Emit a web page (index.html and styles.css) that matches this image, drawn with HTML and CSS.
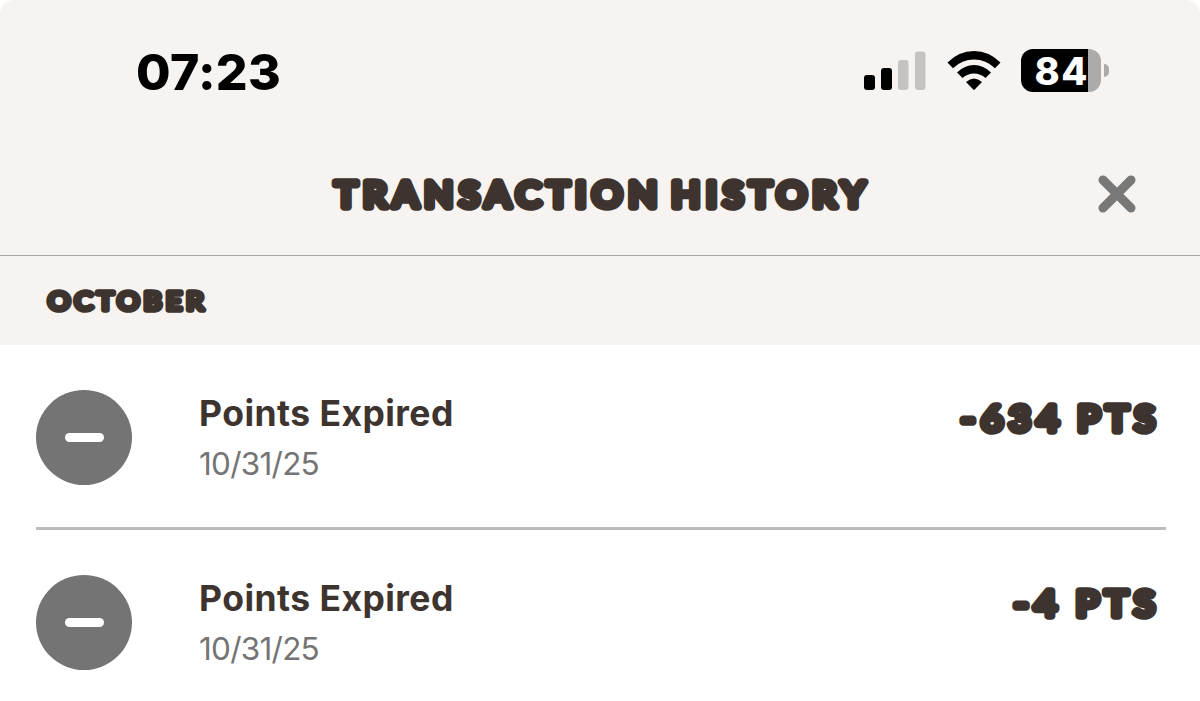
FILE: index.html
```
<!DOCTYPE html>
<html lang="en">
<head>
    <meta charset="UTF-8">
    <meta name="viewport" content="width=device-width, initial-scale=1.0">
    <title>Transaction History</title>

    <link rel="stylesheet" href="styles.css">
</head>
<body>

    <div class="screen">
        <div class="top">
            <div class="status-bar">
                <div class="time">07:23</div>
                <div class="status-icons">
                    <svg class="signal" width="62" height="40" viewBox="0 0 62 40">
                        <rect x="0" y="24" width="11" height="15" rx="3"/>
                        <rect x="17" y="17" width="11" height="22" rx="3"/>
                        <rect class="off" x="34" y="9" width="10.5" height="30" rx="3"/>
                        <rect class="off" x="51" y="0.5" width="10.5" height="38.5" rx="3"/>
                    </svg>
                    <svg class="wifi" width="54" height="40" viewBox="0 0 54 40">
                        <path d="M0.5 11.5 Q12 0 27 0 Q42 0 53.5 11.5 L48 17.2 Q39 8.5 27 8.5 Q15 8.5 6 17.2 Z"/>
                        <path d="M10 21.5 Q17.5 14 27 14 Q36.5 14 44 21.5 L38.5 27 Q33.5 22.5 27 22.5 Q20.5 22.5 15.5 27 Z"/>
                        <path d="M19 31 Q27 24 35 31 L27.7 38.5 Q27 39 26.3 38.5 Z"/>
                    </svg>
                    <div class="battery">
                        <div class="battery-body">84</div>
                        <div class="battery-tip"></div>
                    </div>
                </div>
            </div>

            <header>
                <svg class="rounded title" width="552" height="52">
                    <text x="7" y="32" textLength="536" lengthAdjust="spacingAndGlyphs">TRANSACTION HISTORY</text>
                </svg>
                <svg class="close" width="38" height="38" viewBox="0 0 38 38">
                    <path d="M5 5 L33 33 M33 5 L5 33"/>
                </svg>
            </header>
        </div>

        <div class="month">
            <svg class="rounded month-name" width="180" height="50">
                <text x="7" y="37" textLength="160" lengthAdjust="spacingAndGlyphs">OCTOBER</text>
            </svg>
        </div>

        <div class="list">
            <div class="item">
                <div class="minus"></div>
                <div class="info">
                    <h2>Points Expired</h2>
                    <p>10/31/25</p>
                </div>
                <svg class="rounded points" width="210" height="52">
                    <text x="5" y="32" textLength="200" lengthAdjust="spacingAndGlyphs">-634 PTS</text>
                </svg>
            </div>
            <div class="item">
                <div class="minus"></div>
                <div class="info">
                    <h2>Points Expired</h2>
                    <p>10/31/25</p>
                </div>
                <svg class="rounded points" width="210" height="52">
                    <text x="58" y="32" textLength="147" lengthAdjust="spacingAndGlyphs">-4 PTS</text>
                </svg>
            </div>
        </div>
    </div>

</body>
</html>
```
FILE: styles.css
```
*{
    margin: 0;
    padding: 0;
    box-sizing: border-box;
}

body{
    background-color: white;
    font-family: Inter, "Liberation Sans", sans-serif;
    color: #3e342f;
}

.screen{
    width: 1200px;
    height: 701px;
    overflow: hidden;
}

.top{
    height: 256px;
    background-color: #f7f3f0;
    border-bottom: 1px solid #aaa8a6;
    border-radius: 14px 14px 0 0;
}

.status-bar{
    display: flex;
    justify-content: space-between;
    height: 142px;
    padding: 42px 91px 0 136px;
}

.time{
    height: 60px;
    font-size: 50px;
    line-height: 60px;
    font-weight: 800;
    letter-spacing: 0.3px;
    color: black;
}

.status-icons{
    display: flex;
    align-items: flex-start;
    padding-top: 7px;
}

.signal{
    margin-top: 2px;
    margin-right: 21px;
}

.signal .off{
    fill: #c5c2c0;
}

.wifi{
    margin-top: 2px;
    margin-right: 20px;
}

.battery{
    display: flex;
    align-items: center;
}

.battery-body{
    width: 80px;
    height: 43px;
    border-radius: 12px;
    background: linear-gradient(to right, black 67px, #ababab 67px);
    color: white;
    font-size: 38px;
    font-weight: 800;
    line-height: 44px;
    padding-left: 13.5px;
    letter-spacing: 1.5px;
}

.battery-tip{
    width: 5px;
    height: 13px;
    margin-left: 3px;
    border-radius: 0 7px 7px 0;
    background-color: #ababab;
}

header{
    display: flex;
    justify-content: space-between;
    padding: 33px 64px 0 328px;
}

/* heavy round lettering */
.rounded{
    overflow: visible;
    fill: #3e342f;
    stroke: #3e342f;
    stroke-width: 7.5px;
    stroke-linejoin: round;
    stroke-linecap: round;
    font-family: Lato, sans-serif;
    font-size: 35px;
    font-weight: 400;
    letter-spacing: 6px;
    word-spacing: -7px;
}

.close{
    fill: none;
    stroke: #787878;
    stroke-width: 9px;
    stroke-linecap: round;
}

.month{
    height: 89px;
    background-color: #f7f3f0;
    padding: 17px 0 0 41px;
}

.month-name{
    font-size: 25px;
    stroke-width: 5.5px;
    letter-spacing: 4px;
}

.list{
    padding: 0 34px 0 36px;
}

.item{
    display: flex;
    height: 185px;
    padding-top: 45px;
    border-bottom: 3px solid #bcbcbc;
}

.item:last-child{
    border-bottom: none;
}

.minus{
    display: flex;
    align-items: center;
    justify-content: center;
    width: 96px;
    height: 95px;
    border-radius: 50%;
    background-color: #747474;
}

.minus::before{
    content: "";
    width: 39px;
    height: 9px;
    border-radius: 5px;
    background-color: white;
}

.info{
    flex: 1;
    padding-left: 67px;
}

.info h2{
    font-size: 35.5px;
    line-height: 48px;
    font-weight: 700;
    letter-spacing: 0.45px;
}

.info p{
    font-size: 31.5px;
    line-height: 52px;
    font-weight: 400;
    letter-spacing: -0.75px;
    color: #747474;
}

.points{
    margin-top: 9px;
    word-spacing: -3px;
}
```
